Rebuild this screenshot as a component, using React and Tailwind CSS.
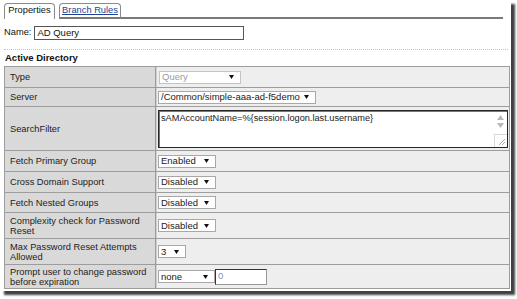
import React from "react";

function Arrow() {
  return (
    <svg width="5" height="4" viewBox="0 0 5 4" className="absolute right-[6px] top-1/2 -translate-y-1/2">
      <polygon points="0,0 5,0 2.5,4" fill="#111" />
    </svg>
  );
}

function Select({ value, w, disabled }) {
  return (
    <div
      className={`relative flex items-center h-[13px] bg-white border pl-[2px] text-[9.5px] leading-none ${
        disabled ? "border-[#c4c4c4] text-[#9a9a9a]" : "border-[#a8a8a8] text-[#222]"
      }`}
      style={{ width: w }}
    >
      <span>{value}</span>
      <Arrow />
    </div>
  );
}

function Row({ label, h, first, children }) {
  return (
    <div className={`flex ${first ? "" : "border-t border-[#9d9d9d]"}`} style={{ height: h }}>
      <div className="w-[151px] shrink-0 bg-[#d9d9d9] border-r border-[#9d9d9d] pl-[5px] flex items-center text-[9.3px] leading-[10px] text-[#222]">
        <div>{label}</div>
      </div>
      <div className="flex-1 bg-[#eeeeee] border-l border-[#d0d0d0] pl-[1px] pr-[1px] flex items-center">
        {children}
      </div>
    </div>
  );
}

export default function App() {
  return (
    <div className="w-[517px] h-[299px] bg-white font-['Liberation_Sans',Arial,sans-serif] text-[#222]">
      <div className="w-[511px] h-[291px] bg-white shadow-[4px_4px_2px_rgba(0,0,0,0.75)] flex flex-col">
        {/* tabs */}
        <div className="flex items-end h-[19px] pt-[3px] pl-[4px] pr-[8px]">
          <div className="h-[16px] w-[51px] border border-b-0 border-[#8a8a8a] rounded-t-[4px] bg-white flex items-center justify-center text-[9.3px] text-[#111] pb-[1px]">
            Properties
          </div>
          <div className="w-[4px] h-[16px]" />
          <div className="h-[16px] w-[62px] border border-[#8a8a8a] border-b-2 border-b-[#7a7a7a] rounded-t-[4px] bg-white flex items-center justify-center text-[9.3px] text-[#1f3f96] underline">
            Branch Rules
          </div>
          <div className="flex-1 h-[2px] mb-0 bg-[#7a7a7a]" />
        </div>

        {/* name */}
        <div className="mt-[7px] pl-[4px] flex items-center h-[14px] text-[9.3px]">
          <span className="text-[#111]">Name:</span>
          <div className="ml-[3px] w-[210px] h-[14px] border border-[#555] bg-white flex items-center pl-[2px] text-[9.5px] text-[#111]">
            AD Query
          </div>
        </div>

        {/* dotted line */}
        <div className="mt-[9px] ml-[4px] w-[504px] border-t border-dotted border-[#c4c4c4]" />

        {/* heading */}
        <div className="mt-[2px] h-[12px] pl-[5px] flex items-center font-bold text-[9.5px] text-[#111]">
          Active Directory
        </div>

        {/* table */}
        <div className="mt-[2px] ml-[4px] w-[506px] border border-[#9d9d9d]">
          <Row label="Type" h={20} first>
            <div className="pl-[1px]">
              <Select value="Query" w={82} disabled />
            </div>
          </Row>
          <Row label="Server" h={19}>
            <Select value="/Common/simple-aaa-ad-f5demo" w={158} />
          </Row>
          <Row label="SearchFilter" h={44}>
            <div className="relative w-[350px] h-[38px] bg-white border border-[#262626] shadow-[inset_1px_1px_0_#777] flex">
              <div className="flex-1 pl-[2px] pt-[2px] text-[9.2px] leading-[11px] text-[#222]">
                sAMAccountName=%&#123;session.logon.last.username&#125;
              </div>
              <div className="w-[13px] h-full flex flex-col items-center">
                <svg width="7" height="5" viewBox="0 0 7 5" className="mt-[4px]">
                  <polygon points="0,5 7,5 3.5,0" fill="#b8b8b8" />
                </svg>
                <svg width="7" height="5" viewBox="0 0 7 5" className="mt-[3px]">
                  <polygon points="0,0 7,0 3.5,5" fill="#b8b8b8" />
                </svg>
                <div className="mt-auto w-[13px] h-[13px] border-t border-l border-[#d8d8d8] relative">
                  <svg width="9" height="9" viewBox="0 0 9 9" className="absolute right-[1px] bottom-[1px]">
                    <line x1="8" y1="2" x2="2" y2="8" stroke="#aaa" strokeWidth="1" />
                    <line x1="8" y1="5" x2="5" y2="8" stroke="#aaa" strokeWidth="1" />
                  </svg>
                </div>
              </div>
            </div>
          </Row>
          <Row label="Fetch Primary Group" h={21}>
            <Select value="Enabled" w={58} />
          </Row>
          <Row label="Cross Domain Support" h={21}>
            <Select value="Disabled" w={58} />
          </Row>
          <Row label="Fetch Nested Groups" h={20}>
            <Select value="Disabled" w={58} />
          </Row>
          <Row
            label={
              <>
                Complexity check for Password
                <br />
                Reset
              </>
            }
            h={26}
          >
            <Select value="Disabled" w={58} />
          </Row>
          <Row
            label={
              <>
                Max Password Reset Attempts
                <br />
                Allowed
              </>
            }
            h={26}
          >
            <Select value="3" w={28} />
          </Row>
          <Row
            label={
              <>
                Prompt user to change password
                <br />
                before expiration
              </>
            }
            h={24}
          >
            <div className="flex items-center">
              <Select value="none" w={57} />
              <div className="w-[52px] h-[16px] bg-white border border-[#333] border-r-[#999] border-b-[#999] flex items-center pl-[2px] text-[9.5px] text-[#7a95b5]">
                0
              </div>
            </div>
          </Row>
        </div>
      </div>
    </div>
  );
}
